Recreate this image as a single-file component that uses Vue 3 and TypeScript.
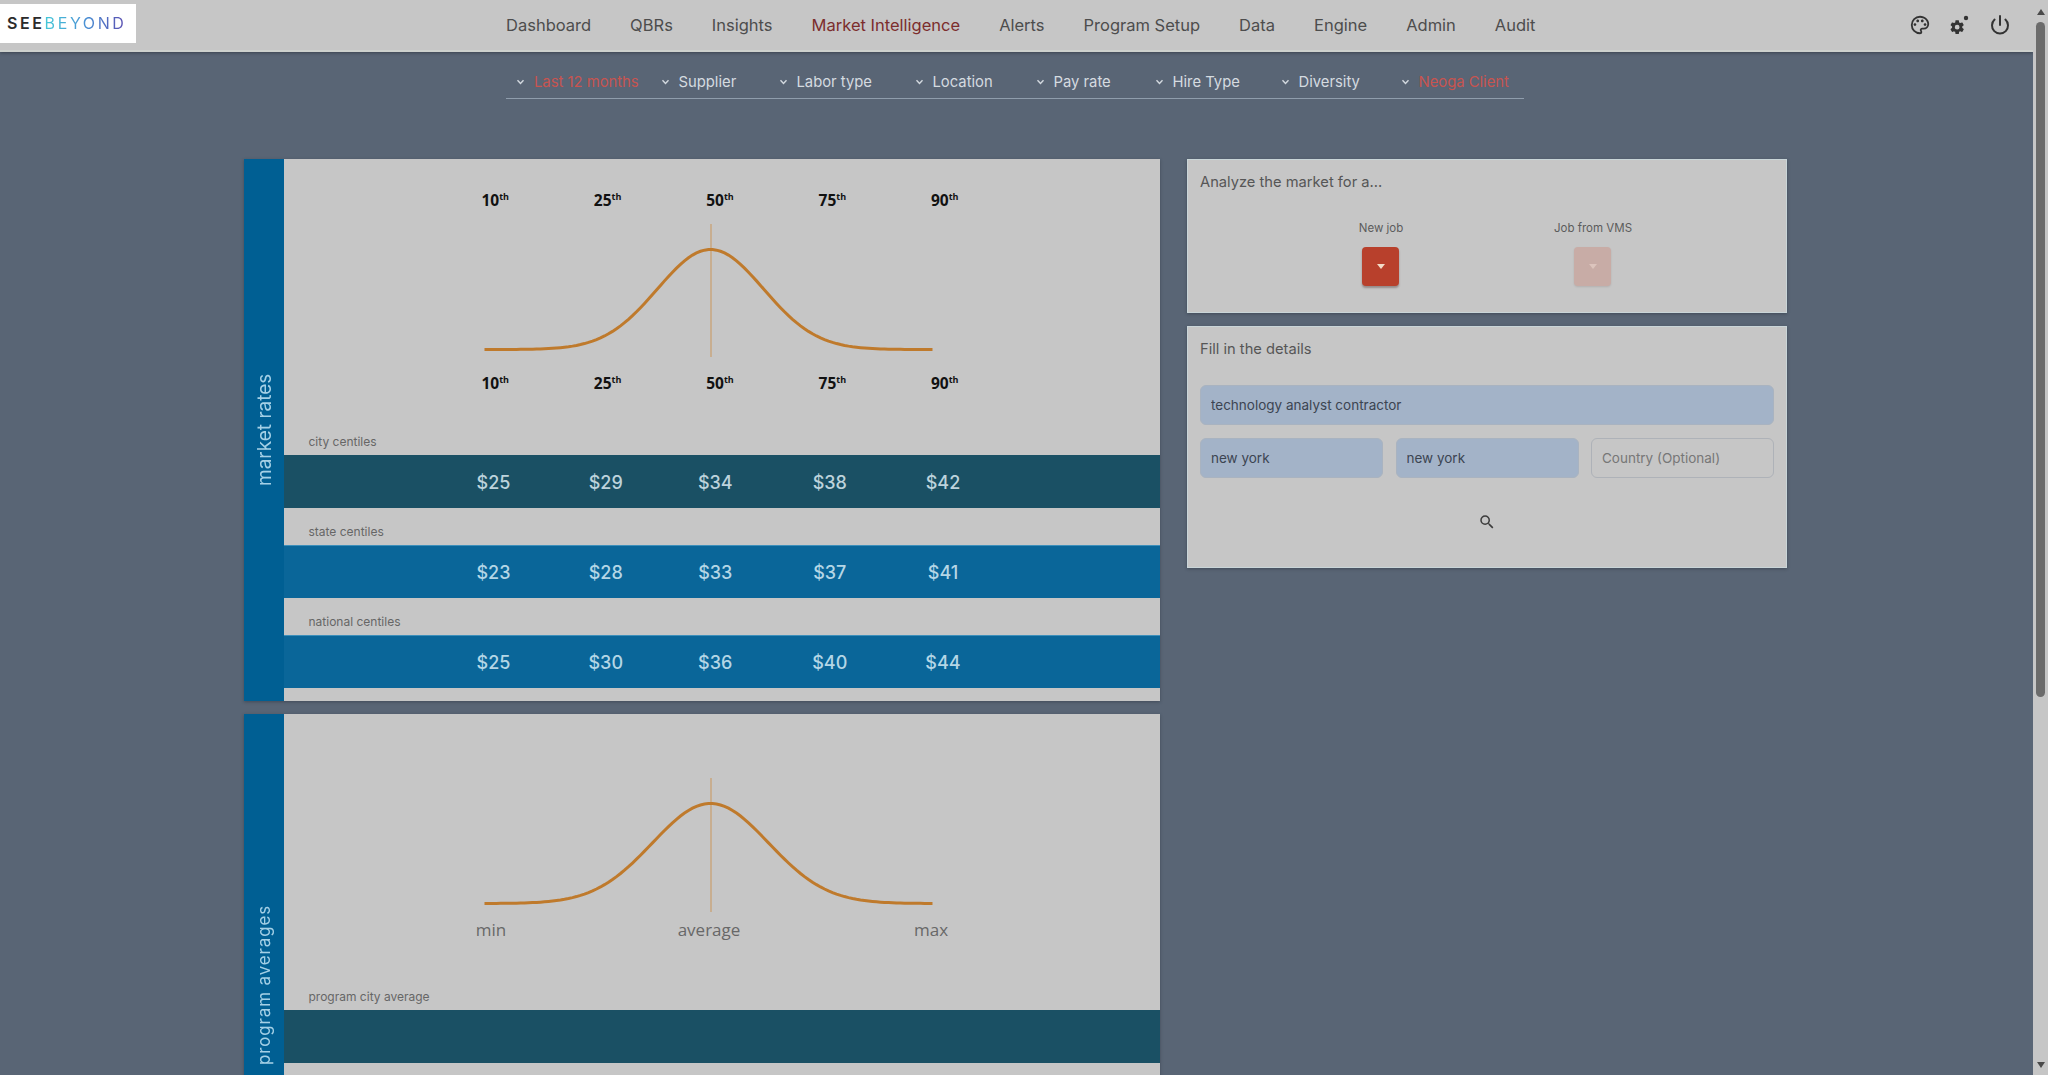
<template>
  <div class="page">
    <div class="content">
      <header class="topbar">
        <div class="logo"><b>SEE</b><span>BEYOND</span></div>
        <nav class="nav">
          <a v-for="item in navItems" :key="item" :class="{ active: item === 'Market Intelligence' }">{{ item }}</a>
        </nav>
        <div class="top-icons">
          <svg width="22" height="22" viewBox="0 0 24 24">
            <path d="M12,22A10,10 0 0,1 2,12A10,10 0 0,1 12,2C17.5,2 22,6 22,11A6,6 0 0,1 16,17H14.2C13.9,17 13.7,17.2 13.7,17.5C13.7,17.6 13.8,17.7 13.8,17.8C14.2,18.3 14.4,18.9 14.4,19.5C14.5,20.9 13.4,22 12,22M12,4A8,8 0 0,0 4,12A8,8 0 0,0 12,20C12.3,20 12.5,19.8 12.5,19.5C12.5,19.3 12.4,19.2 12.4,19.1C12,18.6 11.8,18.1 11.8,17.5C11.8,16.1 12.9,15 14.3,15H16A4,4 0 0,0 20,11C20,7.1 16.4,4 12,4M6.5,10C7.3,10 8,10.7 8,11.5C8,12.3 7.3,13 6.5,13C5.7,13 5,12.3 5,11.5C5,10.7 5.7,10 6.5,10M9.5,6C10.3,6 11,6.7 11,7.5C11,8.3 10.3,9 9.5,9C8.7,9 8,8.3 8,7.5C8,6.7 8.7,6 9.5,6M14.5,6C15.3,6 16,6.7 16,7.5C16,8.3 15.3,9 14.5,9C13.7,9 13,8.3 13,7.5C13,6.7 13.7,6 14.5,6M17.5,10C18.3,10 19,10.7 19,11.5C19,12.3 18.3,13 17.5,13C16.7,13 16,12.3 16,11.5C16,10.7 16.7,10 17.5,10Z" />
          </svg>
          <svg width="28" height="24" viewBox="0 0 28 24">
            <path transform="translate(3 6) scale(.68)" d="M12,15.5A3.5,3.5 0 0,1 8.5,12A3.5,3.5 0 0,1 12,8.5A3.5,3.5 0 0,1 15.5,12A3.5,3.5 0 0,1 12,15.5M19.43,12.97C19.47,12.65 19.5,12.33 19.5,12C19.5,11.67 19.47,11.34 19.43,11L21.54,9.37C21.73,9.22 21.78,8.95 21.66,8.73L19.66,5.27C19.54,5.05 19.27,4.96 19.05,5.05L16.56,6.05C16.04,5.66 15.5,5.32 14.87,5.07L14.5,2.42C14.46,2.18 14.25,2 14,2H10C9.75,2 9.54,2.18 9.5,2.42L9.13,5.07C8.5,5.32 7.96,5.66 7.44,6.05L4.95,5.05C4.73,4.96 4.46,5.05 4.34,5.27L2.34,8.73C2.21,8.95 2.27,9.22 2.46,9.37L4.57,11C4.53,11.34 4.5,11.67 4.5,12C4.5,12.33 4.53,12.65 4.57,12.97L2.46,14.63C2.27,14.78 2.21,15.05 2.34,15.27L4.34,18.73C4.46,18.95 4.73,19.03 4.95,18.95L7.44,17.94C7.96,18.34 8.5,18.68 9.13,18.93L9.5,21.58C9.54,21.82 9.75,22 10,22H14C14.25,22 14.46,21.82 14.5,21.58L14.87,18.93C15.5,18.67 16.04,18.34 16.56,17.94L19.05,18.95C19.27,19.03 19.54,18.95 19.66,18.73L21.66,15.27C21.78,15.05 21.73,14.78 21.54,14.63L19.43,12.97Z" />
            <circle cx="20" cy="5" r="2.2" />
          </svg>
          <svg width="24" height="24" viewBox="0 0 24 24" fill="none" stroke="#333" stroke-width="2" stroke-linecap="round">
            <path d="M12 3v9" />
            <path d="M6.6 6.6a8 8 0 1 0 10.8 0" />
          </svg>
        </div>
      </header>

      <div class="filters">
        <div v-for="f in filters" :key="f.label" class="filter" :class="{ set: f.set }">
          <svg width="9" height="6" viewBox="0 0 9 6" fill="none" stroke="#d3d9df" stroke-width="1.4"><path d="M1.5 1.2 4.5 4.4 7.5 1.2" /></svg>
          {{ f.label }}
        </div>
      </div>

      <main class="columns">
        <div class="left-col">
          <section class="panel">
            <div class="strip">market rates</div>
            <div class="panel-body">
              <div class="chart">
                <div class="centiles">
                  <span v-for="c in centiles" :key="c">{{ c }}<sup>th</sup></span>
                </div>
                <svg class="curve" width="460" height="134" viewBox="0 0 460 134">
                  <line x1="231" y1="0" x2="231" y2="133" stroke="#c8a67e" stroke-width="1.5" />
                  <path :d="curvePath(53)" fill="none" stroke="#bf7a2c" stroke-width="3" />
                </svg>
                <div class="centiles lower">
                  <span v-for="c in centiles" :key="c">{{ c }}<sup>th</sup></span>
                </div>
                <div class="row-label">city centiles</div>
              </div>
              <template v-for="(row, i) in rateRows" :key="row.label">
                <div v-if="i > 0" class="row-gap">{{ row.label }}</div>
                <div class="rate-bar" :class="{ dark: i === 0 }">
                  <span v-for="v in row.values" :key="v">${{ v }}</span>
                </div>
              </template>
              <div class="tail"></div>
            </div>
          </section>

          <section class="panel">
            <div class="strip wide">program averages</div>
            <div class="panel-body">
              <div class="chart">
                <svg class="curve second" width="460" height="134" viewBox="0 0 460 134">
                  <line x1="231" y1="0" x2="231" y2="134" stroke="#c8a67e" stroke-width="1.5" />
                  <path :d="curvePath(58)" fill="none" stroke="#bf7a2c" stroke-width="3" />
                </svg>
                <div class="range-labels">
                  <span>min</span><span>average</span><span>max</span>
                </div>
                <div class="row-label">program city average</div>
              </div>
              <div class="rate-bar dark"></div>
              <div class="tail"></div>
            </div>
          </section>
        </div>

        <div class="right-col">
          <section class="box analyze">
            <h3>Analyze the market for a...</h3>
            <div class="options">
              <div class="option">
                <span>New job</span>
                <button class="pick" type="button"><i></i></button>
              </div>
              <div class="option">
                <span>Job from VMS</span>
                <button class="pick off" type="button"><i></i></button>
              </div>
            </div>
          </section>

          <section class="box details">
            <h3>Fill in the details</h3>
            <input class="field filled" type="text" value="technology analyst contractor" readonly />
            <div class="field-row">
              <input class="field filled" type="text" value="new york" readonly />
              <input class="field filled" type="text" value="new york" readonly />
              <input class="field" type="text" placeholder="Country (Optional)" readonly />
            </div>
            <svg class="search" width="18" height="18" viewBox="0 0 24 24">
              <path d="M9.5,3A6.5,6.5 0 0,1 16,9.5C16,11.11 15.41,12.59 14.44,13.73L14.71,14H15.5L20.5,19L19,20.5L14,15.5V14.71L13.73,14.44C12.59,15.41 11.11,16 9.5,16A6.5,6.5 0 0,1 3,9.5A6.5,6.5 0 0,1 9.5,3M9.5,5C7,5 5,7 5,9.5C5,12 7,14 9.5,14C12,14 14,12 14,9.5C14,7 12,5 9.5,5Z" />
            </svg>
          </section>
        </div>
      </main>
    </div>

    <aside class="scrollbar">
      <i class="arrow"></i>
      <div class="thumb-track"><div class="thumb"></div></div>
      <i class="arrow down"></i>
    </aside>
  </div>
</template>

<script setup lang="ts">
const navItems = ['Dashboard', 'QBRs', 'Insights', 'Market Intelligence', 'Alerts', 'Program Setup', 'Data', 'Engine', 'Admin', 'Audit']

const filters = [
  { label: 'Last 12 months', set: true },
  { label: 'Supplier' },
  { label: 'Labor type' },
  { label: 'Location' },
  { label: 'Pay rate' },
  { label: 'Hire Type' },
  { label: 'Diversity' },
  { label: 'Neoga Client', set: true },
]

const centiles = [10, 25, 50, 75, 90]

const rateRows = [
  { label: 'city centiles', values: [25, 29, 34, 38, 42] },
  { label: 'state centiles', values: [23, 28, 33, 37, 41] },
  { label: 'national centiles', values: [25, 30, 36, 40, 44] },
]

// bell curve in the svg's own coordinates, peak at x=230.5
function curvePath(sigma: number) {
  const points: string[] = []
  for (let x = 4.5; x <= 454; x += 4) {
    const d = x - 230.5
    const y = 125.5 - 100 * Math.exp(-(d * d) / (2 * sigma * sigma))
    points.push(`${x.toFixed(1)} ${y.toFixed(2)}`)
  }
  return 'M' + points.join('L')
}
</script>

<style scoped>
.page {
  display: flex;
  height: 1075px;
  overflow: hidden;
  background: #596575;
  font-family: Inter, "Open Sans", sans-serif;
}

.content {
  flex: 1;
  min-width: 0;
}

.topbar {
  display: flex;
  align-items: center;
  height: 50px;
  background: #c6c6c6;
  border-bottom: 2px solid #cdd1cd;
  box-shadow: 0 1px 3px rgba(40, 45, 55, 0.6);
}

.logo {
  align-self: flex-start;
  width: 136px;
  height: 39px;
  margin-top: 4px;
  padding-left: 7px;
  box-sizing: border-box;
  background: #fff;
  font-size: 16px;
  line-height: 39px;
  letter-spacing: 2.6px;
  white-space: nowrap;
}

.logo b {
  font-weight: 600;
  color: #2b2b2b;
}

.logo span {
  font-weight: 400;
  background: linear-gradient(90deg, #45c8d8, #4a90d4 50%, #5b4db0);
  -webkit-background-clip: text;
  background-clip: text;
  color: transparent;
}

.nav {
  display: flex;
  gap: 39px;
  margin-left: 370px;
  font-size: 16.5px;
  color: #4d4d4d;
}

.nav .active {
  color: #7c2d2d;
}

.top-icons {
  display: flex;
  align-items: center;
  gap: 14.5px;
  margin-left: auto;
  padding-right: 21px;
}

.top-icons svg {
  fill: #333;
}

.top-icons svg:last-child {
  fill: none;
}

.filters {
  display: grid;
  grid-template-columns: 144.5px 118px 136px 121px 119px 126px 120px 1fr;
  width: 1018px;
  box-sizing: border-box;
  margin: 20px 0 0 506px;
  padding: 0 0 6px 10px;
  border-bottom: 1px solid #8f9dac;
  font-size: 14.8px;
  line-height: 20px;
  color: #d5dbe0;
}

.filter {
  display: flex;
  align-items: center;
  gap: 9px;
  white-space: nowrap;
}

.filter.set {
  color: #c85450;
}

.columns {
  display: grid;
  grid-template-columns: 916px 600px;
  gap: 27px;
  margin: 60px 0 0 244px;
}

.left-col {
  display: flex;
  flex-direction: column;
  gap: 13px;
}

.panel {
  display: flex;
  height: 542px;
  flex: none;
  box-shadow: 0 1px 3px rgba(30, 35, 45, 0.4);
}

.strip {
  display: flex;
  flex: none;
  align-items: center;
  justify-content: center;
  width: 40px;
  background: #005f93;
  writing-mode: vertical-rl;
  transform: rotate(180deg);
  color: #a4d0e6;
  font-size: 19px;
  font-weight: 400;
}

.strip.wide {
  letter-spacing: 0.85px;
  font-size: 17px;
}

.panel-body {
  display: flex;
  flex: 1;
  flex-direction: column;
  background: #c6c6c6;
}

.chart {
  display: flex;
  flex-direction: column;
  height: 296px;
  box-sizing: border-box;
  padding-top: 31px;
}

.centiles {
  display: grid;
  grid-template-columns: repeat(5, 112.4px);
  padding-left: 155px;
  font-family: "Open Sans", sans-serif;
  font-size: 15.5px;
  font-weight: 700;
  line-height: 20px;
  text-align: center;
  color: #111;
}

.centiles sup {
  font-size: 9px;
  line-height: 0;
}

.centiles.lower {
  margin-top: 14.5px;
}

.curve {
  display: block;
  flex: none;
  margin: 14px 0 0 196px;
}

.curve.second {
  margin-top: 33px;
}

.range-labels {
  display: grid;
  grid-template-columns: 200px 236px 208px;
  margin-top: 7px;
  padding-left: 107px;
  font-family: "Open Sans", sans-serif;
  font-size: 17px;
  line-height: 22px;
  text-align: center;
  color: #686868;
}

.row-label,
.row-gap {
  font-size: 12px;
  line-height: 16px;
  color: #666;
}

.row-label {
  margin-top: auto;
  padding: 0 0 5px 24.5px;
}

.row-gap {
  display: flex;
  align-items: flex-end;
  height: 37.5px;
  box-sizing: border-box;
  padding: 0 0 5px 24.5px;
}

.rate-bar {
  display: grid;
  grid-template-columns: 112px 112.5px 106.5px 122.5px 104px;
  align-items: center;
  height: 52.5px;
  box-sizing: border-box;
  padding: 2px 0 0 153.5px;
  background: #0a6699;
  box-shadow: inset 0 1px 0 #3d8fba;
  font-size: 18px;
  font-weight: 500;
  text-align: center;
  color: #b4d6e6;
}

.rate-bar.dark {
  background: #1a5064;
  box-shadow: none;
  color: #bdd3dc;
}

.tail {
  flex: 1;
}

.right-col {
  display: flex;
  flex-direction: column;
  gap: 12.5px;
}

.box {
  box-sizing: border-box;
  padding: 12px 12px 0;
  background: #c6c6c6;
  border: 1px solid #c9d5d8;
  box-shadow: 0 1px 3px rgba(30, 35, 45, 0.4);
}

.analyze {
  height: 154px;
}

.details {
  height: 242px;
}

.box h3 {
  margin: 0;
  font-size: 14.7px;
  font-weight: 400;
  line-height: 20px;
  color: #565656;
}

.options {
  display: flex;
  justify-content: center;
  margin-top: 28px;
}

.option {
  display: flex;
  flex-direction: column;
  align-items: center;
  gap: 11px;
  width: 212px;
  font-size: 11.5px;
  line-height: 16px;
  color: #5c5c5c;
}

.pick {
  display: flex;
  align-items: center;
  justify-content: center;
  width: 37px;
  height: 39px;
  margin-right: 1px;
  padding: 0;
  border: 0;
  border-radius: 4px;
  background: #b8402c;
  box-shadow: 0 2px 2px rgba(60, 30, 25, 0.35);
}

.pick i {
  width: 0;
  height: 0;
  border: 4px solid transparent;
  border-top: 5px solid #f3dcc8;
  border-bottom: 0;
}

.pick.off {
  background: #c8aca6;
  box-shadow: 0 1px 2px rgba(60, 30, 25, 0.12);
}

.pick.off i {
  border-top-color: #dcc4bd;
}

.field {
  display: block;
  width: 100%;
  height: 40px;
  box-sizing: border-box;
  padding: 0 10px;
  border: 1px solid #aeb2b8;
  border-radius: 6px;
  background: transparent;
  outline: none;
  font-family: inherit;
  font-size: 13.5px;
  color: #3c4552;
}

.field::placeholder {
  color: #777;
}

.field.filled {
  border-color: #a9b3c0;
  background: #a3b3c8;
}

.details > .field {
  margin-top: 26px;
}

.field-row {
  display: grid;
  grid-template-columns: repeat(3, 1fr);
  gap: 12.5px;
  margin-top: 13px;
}

.search {
  display: block;
  margin: 35px auto 0;
  fill: #3c3c3c;
}

.scrollbar {
  display: flex;
  flex: none;
  flex-direction: column;
  align-items: center;
  width: 15px;
  background: #c6c6c6;
}

.arrow {
  flex: none;
  width: 0;
  height: 0;
  margin: 9px 0 7px;
  border: 4.5px solid transparent;
  border-top: 0;
  border-bottom: 6px solid #4a4a4a;
}

.arrow.down {
  margin: 0 0 7px;
  border: 4.5px solid transparent;
  border-top: 6px solid #4a4a4a;
  border-bottom: 0;
}

.thumb-track {
  flex: 1;
  width: 100%;
  display: flex;
  justify-content: center;
}

.thumb {
  width: 9px;
  height: 675px;
  border-radius: 5px;
  background: #6b6b6b;
}
</style>

<style>
body {
  background: #596575;
}
</style>
